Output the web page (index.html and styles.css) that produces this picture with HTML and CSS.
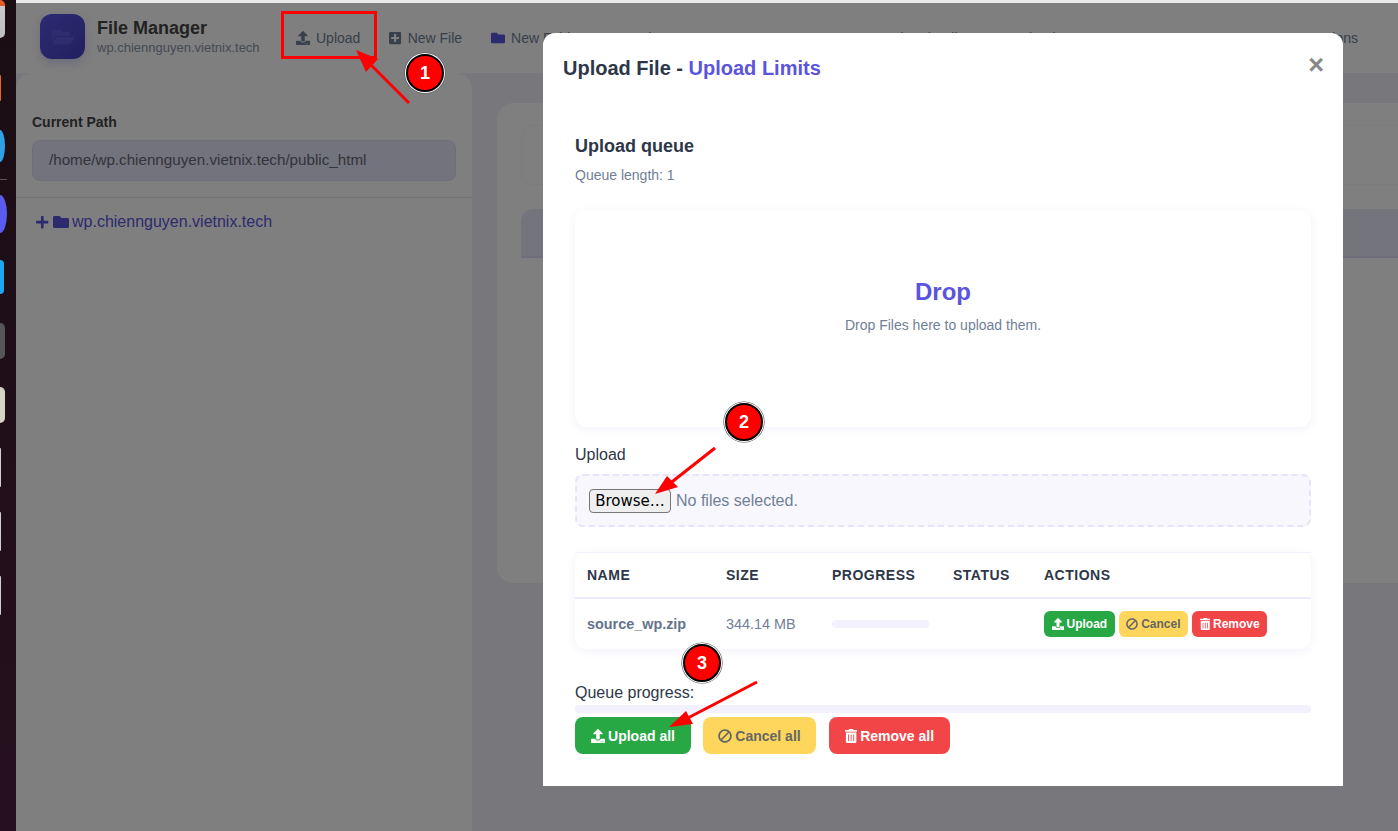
FILE: index.html
```html
<!DOCTYPE html>
<html lang="en">
<head>
    <meta charset="UTF-8">
    <meta name="viewport" content="width=device-width, initial-scale=1.0">
    <title>File Manager</title>
    <link rel="stylesheet" href="styles.css">
</head>
<body>

    <!-- Icon set -->
    <svg class="icon-set" aria-hidden="true">
        <symbol id="i-upload" viewBox="0 0 512 512"><path d="M296 384h-80c-13.3 0-24-10.7-24-24V192h-87.7c-17.8 0-26.7-21.5-14.1-34.1L242.3 5.7c7.5-7.5 19.8-7.5 27.3 0l152.2 152.2c12.6 12.6 3.7 34.1-14.1 34.1H320v168c0 13.3-10.7 24-24 24zm216-8v112c0 13.3-10.7 24-24 24H24c-13.3 0-24-10.7-24-24V376c0-13.3 10.7-24 24-24h136v8c0 30.9 25.1 56 56 56h80c30.9 0 56-25.1 56-56v-8h136c13.3 0 24 10.7 24 24zm-124 88c0-11-9-20-20-20s-20 9-20 20 9 20 20 20 20-9 20-20zm64 0c0-11-9-20-20-20s-20 9-20 20 9 20 20 20 20-9 20-20z"/></symbol>
        <symbol id="i-plus-square" viewBox="0 0 448 512"><path d="M400 32H48C21.5 32 0 53.5 0 80v352c0 26.5 21.5 48 48 48h352c26.5 0 48-21.5 48-48V80c0-26.5-21.5-48-48-48zm-32 252c0 6.6-5.4 12-12 12h-92v92c0 6.6-5.4 12-12 12h-56c-6.6 0-12-5.4-12-12v-92H92c-6.6 0-12-5.4-12-12v-56c0-6.6 5.4-12 12-12h92v-92c0-6.6 5.4-12 12-12h56c6.6 0 12 5.4 12 12v92h92c6.6 0 12 5.4 12 12v56z"/></symbol>
        <symbol id="i-folder" viewBox="0 0 512 512"><path d="M464 128H272l-64-64H48C21.49 64 0 85.49 0 112v288c0 26.51 21.49 48 48 48h416c26.51 0 48-21.49 48-48V176c0-26.51-21.49-48-48-48z"/></symbol>
        <symbol id="i-folder-open" viewBox="0 0 576 512"><path d="M572.694 292.093L500.27 416.248A63.997 63.997 0 0 1 444.989 448H45.025c-18.523 0-30.064-20.093-20.731-36.093l72.424-124.155A64 64 0 0 1 152 256h399.964c18.523 0 30.064 20.093 20.73 36.093zM152 224h328v-48c0-26.51-21.49-48-48-48H272l-64-64H48C21.49 64 0 85.49 0 112v278.046l69.077-118.418C86.214 242.25 117.989 224 152 224z"/></symbol>
        <symbol id="i-plus" viewBox="0 0 448 512"><path d="M416 208H272V64c0-17.67-14.33-32-32-32h-32c-17.67 0-32 14.33-32 32v144H32c-17.67 0-32 14.33-32 32v32c0 17.67 14.33 32 32 32h144v144c0 17.67 14.33 32 32 32h32c17.67 0 32-14.33 32-32V304h144c17.67 0 32-14.33 32-32v-32c0-17.67-14.33-32-32-32z"/></symbol>
        <symbol id="i-ban" viewBox="0 0 512 512"><path d="M256 8C119.034 8 8 119.033 8 256s111.034 248 248 248 248-111.034 248-248S392.967 8 256 8zm130.108 117.892c65.448 65.448 70 165.481 20.677 235.637L150.47 105.216c70.204-49.356 170.226-44.735 235.638 20.676zM125.892 386.108c-65.448-65.448-70-165.481-20.677-235.637L361.53 406.784c-70.203 49.356-170.226 44.736-235.638-20.676z"/></symbol>
        <symbol id="i-trash" viewBox="0 0 448 512"><path d="M32 464a48 48 0 0 0 48 48h288a48 48 0 0 0 48-48V128H32zm272-256a16 16 0 0 1 32 0v224a16 16 0 0 1-32 0zm-96 0a16 16 0 0 1 32 0v224a16 16 0 0 1-32 0zm-96 0a16 16 0 0 1 32 0v224a16 16 0 0 1-32 0zM432 32H312l-9.4-18.7A24 24 0 0 0 281.1 0H166.8a23.72 23.72 0 0 0-21.4 13.3L136 32H16A16 16 0 0 0 0 48v32a16 16 0 0 0 16 16h416a16 16 0 0 0 16-16V48a16 16 0 0 0-16-16z"/></symbol>
    </svg>

    <!-- Desktop dock, cut off by the screenshot -->
    <div class="dock">
        <div class="dock-item dock-files"></div>
        <div class="dock-item dock-orange"></div>
        <div class="dock-item dock-blue"></div>
        <div class="dock-sep"></div>
        <div class="dock-item dock-purple"></div>
        <div class="dock-item dock-cyan"></div>
        <div class="dock-item dock-gray"></div>
        <div class="dock-item dock-beige"></div>
        <div class="dock-item dock-sheet"></div>
        <div class="dock-item dock-sheet"></div>
        <div class="dock-item dock-sheet"></div>
    </div>

    <div class="app">
        <header class="topbar">
            <div class="brand">
                <div class="brand-logo"><svg class="logo-icon"><use href="#i-folder-open"/></svg></div>
                <div>
                    <div class="brand-name">File Manager</div>
                    <div class="brand-host">wp.chiennguyen.vietnix.tech</div>
                </div>
            </div>
            <nav class="toolbar">
                <a class="tool"><svg class="icon"><use href="#i-upload"/></svg>Upload</a>
                <a class="tool"><svg class="icon icon-narrow"><use href="#i-plus-square"/></svg>New File</a>
                <a class="tool"><svg class="icon icon-primary"><use href="#i-folder"/></svg>New Folder</a>
                <a class="tool">Search</a>
                <a class="tool">Copy</a>
                <a class="tool">Move</a>
                <a class="tool">Rename</a>
                <a class="tool">Thumbnails</a>
                <a class="tool">Download</a>
                <a class="tool tool-last">Mass Actions</a>
            </nav>
        </header>

        <div class="workspace">
            <aside class="sidebar">
                <div class="path-block">
                    <label class="path-label">Current Path</label>
                    <div class="path-input">/home/wp.chiennguyen.vietnix.tech/public_html</div>
                </div>
                <div class="tree-row">
                    <svg class="icon icon-narrow icon-primary tree-plus"><use href="#i-plus"/></svg>
                    <svg class="icon icon-primary tree-folder"><use href="#i-folder"/></svg>
                    <span>wp.chiennguyen.vietnix.tech</span>
                </div>
            </aside>
            <main class="content">
                <div class="card">
                    <div class="card-box"></div>
                    <div class="card-head"></div>
                </div>
            </main>
        </div>
    </div>

    <div class="backdrop"></div>

    <!-- Upload dialog -->
    <section class="modal">
        <div class="modal-header">
            <h2 class="modal-title">Upload File - <span class="primary">Upload Limits</span></h2>
            <span class="modal-close">×</span>
        </div>
        <div class="modal-body">
            <h3 class="queue-title">Upload queue</h3>
            <p class="queue-length">Queue length: 1</p>

            <div class="dropzone">
                <div class="drop-title">Drop</div>
                <div class="drop-text">Drop Files here to upload them.</div>
            </div>

            <label class="field-label">Upload</label>
            <div class="file-field">
                <button class="browse">Browse…</button>
                <span class="file-name">No files selected.</span>
            </div>

            <table class="queue-table">
                <thead>
                    <tr>
                        <th class="col-name">Name</th>
                        <th class="col-size">Size</th>
                        <th class="col-progress">Progress</th>
                        <th class="col-status">Status</th>
                        <th>Actions</th>
                    </tr>
                </thead>
                <tbody>
                    <tr>
                        <td class="file-cell">source_wp.zip</td>
                        <td class="size-cell">344.14 MB</td>
                        <td><div class="bar bar-row"></div></td>
                        <td></td>
                        <td>
                            <div class="row-actions">
                                <button class="btn btn-sm btn-green"><svg class="icon"><use href="#i-upload"/></svg>Upload</button>
                                <button class="btn btn-sm btn-yellow"><svg class="icon icon-flip"><use href="#i-ban"/></svg>Cancel</button>
                                <button class="btn btn-sm btn-red"><svg class="icon icon-narrow"><use href="#i-trash"/></svg>Remove</button>
                            </div>
                        </td>
                    </tr>
                </tbody>
            </table>

            <div class="progress-label">Queue progress:</div>
            <div class="bar bar-queue"></div>
            <div class="queue-actions">
                <button class="btn btn-green btn-all-upload"><svg class="icon"><use href="#i-upload"/></svg>Upload all</button>
                <button class="btn btn-yellow btn-all-cancel"><svg class="icon icon-flip"><use href="#i-ban"/></svg>Cancel all</button>
                <button class="btn btn-red btn-all-remove"><svg class="icon icon-narrow"><use href="#i-trash"/></svg>Remove all</button>
            </div>
        </div>
    </section>

    <!-- Tutorial marks drawn on top of the screenshot -->
    <div class="mark-box"></div>
    <svg class="mark-arrows" width="1398" height="831">
        <line x1="409" y1="103" x2="366" y2="60"/>
        <polygon points="356,50 378,59 366,72"/>
        <line x1="715" y1="448" x2="668" y2="485"/>
        <polygon points="655,494 667,476 678,487"/>
        <line x1="757" y1="682" x2="684" y2="720"/>
        <polygon points="669,727 686,711 693,724"/>
    </svg>
    <div class="badge badge-1">1</div>
    <div class="badge badge-2">2</div>
    <div class="badge badge-3">3</div>

</body>
</html>
```

FILE: styles.css
```css
* {
    box-sizing: border-box;
}
body {
    margin: 0;
    height: 831px;
    overflow: hidden;
    display: flex;
    font-family: "Liberation Sans", Arial, sans-serif;
    color: #2d3748;
    background-color: #fff;
}
.icon-set {
    display: none;
}
.icon {
    width: 1em;
    height: 1em;
    fill: currentColor;
    flex: none;
}
.icon-narrow {
    width: 0.875em;
}
.icon-flip {
    transform: scaleX(-1);
}
.icon-primary {
    color: #5b54dc;
}
.primary {
    color: #5b54dc;
}

/* Dock */
.dock {
    width: 16px;
    flex: none;
    display: flex;
    flex-direction: column;
    align-items: flex-start;
    background: linear-gradient(#1a0d13, #26101f);
    overflow: hidden;
}
.dock-item {
    border-radius: 0 7px 7px 0;
}
.dock-files {
    width: 5px;
    height: 38px;
    background: linear-gradient(#e8592a 0, #e8592a 15%, #c9c9c9 16%, #bdbdbd);
}
.dock-orange {
    width: 1px;
    height: 26px;
    margin-top: 37px;
    background-color: #e8622a;
}
.dock-blue {
    width: 5px;
    height: 32px;
    margin-top: 29px;
    border-radius: 0 100% 100% 0 / 0 50% 50% 0;
    background-color: #2f9fe6;
}
.dock-sep {
    width: 7px;
    height: 1px;
    margin-top: 17px;
    background-color: #5c5257;
}
.dock-purple {
    width: 7px;
    height: 38px;
    margin-top: 15px;
    border-radius: 0 100% 100% 0 / 0 50% 50% 0;
    background-color: #5a5cf0;
}
.dock-cyan {
    width: 4px;
    height: 34px;
    margin-top: 27px;
    background-color: #1ea7f5;
}
.dock-gray {
    width: 5px;
    height: 36px;
    margin-top: 29px;
    background-color: #565656;
}
.dock-beige {
    width: 5px;
    height: 36px;
    margin-top: 28px;
    background-color: #d6d3c4;
}
.dock-sheet {
    width: 1px;
    height: 39px;
    margin-top: 25px;
    background-color: #cfcfcf;
}

/* Page behind the dialog */
.app {
    flex: 1;
    min-width: 0;
    border-top: 3px solid #e9e9e9;
    display: flex;
    flex-direction: column;
    background-color: #eeeef9;
}
.topbar {
    height: 70px;
    flex: none;
    display: flex;
    align-items: center;
    padding: 0 40px 0 24px;
    background-color: #fff;
}
.brand {
    display: flex;
    align-items: center;
    gap: 12px;
    width: 256px;
    flex: none;
    margin-top: -3px;
}
.brand-logo {
    width: 45px;
    height: 45px;
    border-radius: 12px;
    background: linear-gradient(135deg, #5a56e6, #4640c0);
    display: flex;
    align-items: center;
    justify-content: center;
    box-shadow: 0 4px 10px rgba(91, 84, 220, 0.25);
}
.logo-icon {
    width: 22px;
    height: 20px;
    fill: #5f5ae0;
}
.brand-name {
    font-size: 18px;
    line-height: 22px;
    font-weight: bold;
    color: #444;
}
.brand-host {
    font-size: 13px;
    line-height: 17px;
    color: #8a93a6;
}
.toolbar {
    flex: 1;
    display: flex;
    align-items: center;
    gap: 29px;
    font-size: 14px;
    color: #718096;
}
.tool {
    display: flex;
    align-items: center;
    gap: 6px;
}
.tool .icon {
    font-size: 14px;
}
.tool-last {
    margin-left: auto;
}
.workspace {
    flex: 1;
    display: flex;
    min-height: 0;
}
.sidebar {
    width: 456px;
    flex: none;
    background-color: #fff;
    border-radius: 16px 16px 0 0;
}
.path-block {
    padding: 41px 16px 16px;
    border-bottom: 1px solid #e6e6f5;
}
.path-label {
    display: block;
    font-size: 14px;
    line-height: 17px;
    font-weight: bold;
    color: #444;
    margin-bottom: 9px;
}
.path-input {
    height: 41px;
    padding: 0 16px;
    line-height: 37px;
    font-size: 15.2px;
    color: #666876;
    background-color: #e6e6fa;
    border: 1px solid #dcdcf2;
    border-radius: 8px;
}
.tree-row {
    display: flex;
    align-items: center;
    gap: 3px;
    padding: 15px 20px;
    font-size: 16px;
    line-height: 18px;
    color: #5b54dc;
}
.tree-plus {
    font-size: 14.4px;
    margin-right: 1.4px;
}
.tree-folder {
    font-size: 16px;
}
.content {
    flex: 1;
    min-width: 0;
    overflow: hidden;
    padding: 30px 0 0 25px;
}
.card {
    width: 950px;
    height: 480px;
    padding: 22px 24px;
    background-color: #fff;
    border-radius: 16px;
}
.card-box {
    height: 60px;
    border: 1px solid #f8f8fc;
    border-radius: 12px;
}
.card-head {
    height: 49px;
    margin-top: 24px;
    background-color: #e9e9f8;
    border-bottom: 2px solid #dddcf5;
    border-radius: 12px 12px 0 0;
}
.backdrop {
    position: absolute;
    top: 3px;
    left: 16px;
    right: 0;
    bottom: 0;
    background-color: rgba(0, 0, 0, 0.5);
}

/* Dialog */
.modal {
    position: absolute;
    top: 33px;
    left: 543px;
    width: 800px;
    height: 753px;
    background-color: #fff;
    border-radius: 12px 12px 0 0;
}
.modal-header {
    display: flex;
    justify-content: space-between;
    align-items: center;
    height: 70px;
    padding: 0 20px;
}
.modal-title {
    margin: 0;
    font-size: 20px;
    line-height: 24px;
    color: #2d3748;
}
.modal-close {
    font-size: 27px;
    line-height: 28px;
    font-weight: bold;
    color: #888;
    margin: -6px -1px 0 0;
}
.modal-body {
    padding: 32px 32px 0;
}
.queue-title {
    margin: 0;
    font-size: 18px;
    line-height: 22px;
    color: #2d3748;
}
.queue-length {
    margin: 9px 0 0;
    font-size: 14px;
    line-height: 18px;
    color: #718096;
}
.dropzone {
    height: 217px;
    margin-top: 26px;
    padding-top: 67px;
    text-align: center;
    border-radius: 12px;
    box-shadow: 0 2px 10px rgba(91, 84, 220, 0.08);
}
.drop-title {
    font-size: 24px;
    line-height: 30px;
    font-weight: bold;
    color: #5b54dc;
}
.drop-text {
    margin-top: 9px;
    font-size: 14px;
    line-height: 18px;
    color: #718096;
}
.field-label {
    display: block;
    margin-top: 19px;
    font-size: 16px;
    line-height: 18px;
}
.file-field {
    display: flex;
    align-items: center;
    height: 53px;
    margin-top: 10px;
    padding: 0 12px;
    gap: 5px;
    background-color: #f8f7fe;
    border: 2px dashed #e6e3fa;
    border-radius: 8px;
}
.browse {
    width: 82px;
    height: 24px;
    padding: 0;
    font-family: "DejaVu Sans", sans-serif;
    font-size: 15px;
    color: #000;
    background-color: #efefef;
    border: 1px solid #767676;
    border-radius: 4px;
}
.file-name {
    font-size: 16px;
    color: #718096;
}
.queue-table {
    width: 100%;
    height: 97px;
    margin-top: 25px;
    border-collapse: separate;
    border-spacing: 0;
    border-radius: 12px;
    box-shadow: 0 2px 10px rgba(91, 84, 220, 0.08);
    font-size: 14.4px;
}
.queue-table th {
    height: 47px;
    padding: 0 12px;
    text-align: left;
    font-size: 14px;
    text-transform: uppercase;
    letter-spacing: 0.5px;
    color: #2d3748;
    border-top: 1px solid #f3f1fe;
    border-bottom: 2px solid #eceafc;
}
.queue-table td {
    padding: 0 12px;
}
.col-name {
    width: 139px;
}
.col-size {
    width: 106px;
}
.col-progress {
    width: 121px;
}
.col-status {
    width: 91px;
}
.file-cell {
    font-weight: bold;
    color: #64748b;
}
.size-cell {
    color: #718096;
}
.bar {
    background-color: #f3f1fe;
    border-radius: 4px;
}
.bar-row {
    width: 97px;
    height: 8px;
}
.bar-queue {
    height: 8px;
    margin-top: 3px;
}
.row-actions {
    display: flex;
    gap: 4px;
}
.btn {
    display: inline-flex;
    align-items: center;
    justify-content: center;
    gap: 3px;
    height: 37px;
    padding: 0;
    border: none;
    border-radius: 8px;
    font-family: inherit;
    font-size: 14px;
    font-weight: bold;
    color: #fff;
}
.btn-sm {
    height: 26px;
    padding: 0 7.5px;
    border-radius: 6px;
    font-size: 12px;
}
.btn-green {
    background-color: #28a745;
}
.btn-yellow {
    background-color: #ffd65c;
    color: #666;
}
.btn-red {
    background-color: #f24548;
}
.progress-label {
    margin-top: 35px;
    font-size: 16px;
    line-height: 18px;
}
.queue-actions {
    display: flex;
    margin-top: 4px;
}
.btn-all-upload {
    width: 116px;
}
.btn-all-cancel {
    width: 113px;
    margin-left: 12px;
}
.btn-all-remove {
    width: 121px;
    margin-left: 13px;
}

/* Tutorial marks */
.mark-box {
    position: absolute;
    top: 11px;
    left: 281px;
    width: 96px;
    height: 48px;
    border: 3px solid #fe0000;
}
.mark-arrows {
    position: absolute;
    top: 0;
    left: 0;
}
.mark-arrows line {
    stroke: #fe0000;
    stroke-width: 3;
}
.mark-arrows polygon {
    fill: #fe0000;
}
.badge {
    position: absolute;
    width: 38px;
    height: 38px;
    line-height: 34px;
    text-align: center;
    font-size: 18px;
    font-weight: bold;
    color: #fff;
    background-color: #fe0000;
    border: 2px solid #000;
    border-radius: 50%;
    box-shadow: 0 0 0 1px #fff, 0 0 0 1.6px #555;
}
.badge-1 {
    top: 54px;
    left: 406px;
}
.badge-2 {
    top: 403px;
    left: 725px;
}
.badge-3 {
    top: 644px;
    left: 683px;
}
```
